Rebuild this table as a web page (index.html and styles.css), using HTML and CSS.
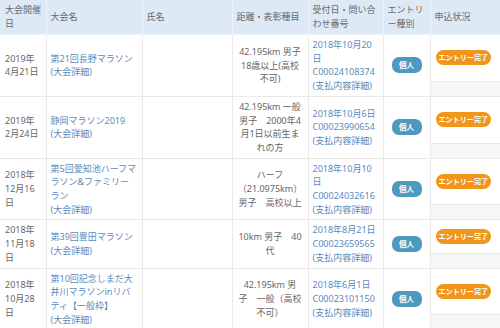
FILE: index.html
```html
<!DOCTYPE html>
<html lang="ja">
<head>
<meta charset="utf-8">
<title>エントリー履歴</title>
<link rel="stylesheet" href="styles.css">
</head>
<body>
<table class="history">
  <colgroup>
    <col class="c-date"><col class="c-name"><col class="c-person"><col class="c-dist"><col class="c-recv"><col class="c-type"><col class="c-status">
  </colgroup>
  <thead>
    <tr>
      <th>大会開催日</th>
      <th>大会名</th>
      <th>氏名</th>
      <th>距離・表彰種目</th>
      <th>受付日・問い合わせ番号</th>
      <th>エントリー種別</th>
      <th>申込状況</th>
    </tr>
  </thead>
  <tbody>
    <tr>
      <td>2019年<br>4月21日</td>
      <td><a href="#">第21回長野マラソン</a><br><a href="#">(大会詳細)</a></td>
      <td></td>
      <td class="dist">42.195km 男子<br>18歳以上(高校<br>不可)</td>
      <td><a href="#">2018年10月20<br>日<br>C00024108374</a><br><a href="#">(支払内容詳細)</a></td>
      <td class="type"><span class="badge">個人</span></td>
      <td class="status"><div class="status-wrap"><div class="status-top"><span class="done">エントリー完了</span></div><div class="status-sub"></div></div></td>
    </tr>
    <tr>
      <td>2019年<br>2月24日</td>
      <td><a href="#">静岡マラソン2019</a><br><a href="#">(大会詳細)</a></td>
      <td></td>
      <td class="dist">42.195km 一般<br>男子　2000年4<br>月1日以前生ま<br>れの方</td>
      <td><a href="#">2018年10月6日<br>C00023990654</a><br><a href="#">(支払内容詳細)</a></td>
      <td class="type"><span class="badge">個人</span></td>
      <td class="status"><div class="status-wrap"><div class="status-top"><span class="done">エントリー完了</span></div><div class="status-sub"></div></div></td>
    </tr>
    <tr>
      <td>2018年<br>12月16<br>日</td>
      <td><a href="#">第5回愛知池ハーフマ<br>ラソン&amp;ファミリー<br>ラン</a><br><a href="#">(大会詳細)</a></td>
      <td></td>
      <td class="dist">ハーフ<br>（21.0975km）<br>男子　高校以上</td>
      <td><a href="#">2018年10月10<br>日<br>C00024032616</a><br><a href="#">(支払内容詳細)</a></td>
      <td class="type"><span class="badge">個人</span></td>
      <td class="status"><div class="status-wrap"><div class="status-top"><span class="done">エントリー完了</span></div><div class="status-sub"></div></div></td>
    </tr>
    <tr>
      <td>2018年<br>11月18<br>日</td>
      <td><a href="#">第39回豊田マラソン</a><br><a href="#">(大会詳細)</a></td>
      <td></td>
      <td class="dist">10km 男子　40<br>代</td>
      <td><a href="#">2018年8月21日<br>C00023659565</a><br><a href="#">(支払内容詳細)</a></td>
      <td class="type"><span class="badge">個人</span></td>
      <td class="status"><div class="status-wrap"><div class="status-top"><span class="done">エントリー完了</span></div><div class="status-sub"></div></div></td>
    </tr>
    <tr>
      <td>2018年<br>10月28<br>日</td>
      <td><a href="#">第10回記念しまだ大<br>井川マラソンinリバ<br>ティ【一般枠】</a><br><a href="#">(大会詳細)</a></td>
      <td></td>
      <td class="dist">42.195km 男<br>子　一般（高校<br>不可）</td>
      <td><a href="#">2018年6月1日<br>C00023101150</a><br><a href="#">(支払内容詳細)</a></td>
      <td class="type"><span class="badge">個人</span></td>
      <td class="status"><div class="status-wrap"><div class="status-top"><span class="done">エントリー完了</span></div><div class="status-sub"></div></div></td>
    </tr>
  </tbody>
</table>
</body>
</html>
```
FILE: styles.css
```css
html, body {
  margin: 0;
  padding: 0;
  background: #fff;
}
body {
  font-family: "Noto Sans", "Noto Sans CJK JP", sans-serif;
  font-size: 9px;
  line-height: 13.7px;
  color: #666;
}
.history {
  width: 500px;
  border-collapse: collapse;
  table-layout: fixed;
}
.c-date { width: 46px; }
.c-name { width: 96px; }
.c-person { width: 90px; }
.c-dist { width: 76px; }
.c-recv { width: 75px; }
.c-type { width: 47px; }
.c-status { width: 70px; }

.history th,
.history td {
  border: 1px solid #e9e9e9;
  padding: 3px 4px;
  text-align: left;
  vertical-align: middle;
}
.history tr > :first-child { border-left: none; padding-left: 5px; }
.history tr > :last-child { border-right: none; }
.history thead tr > * { border-top: none; }
.history th {
  background: #dde9f5;
  font-weight: normal;
  color: #6a6a6a;
  border-color: #eef4fa;
  height: 28px;
}
.history a {
  color: #5a8bbd;
  text-decoration: none;
}
.history td.dist { text-align: center; padding-left: 3px; padding-right: 3px; }
.history td.type { text-align: center; padding: 0; }
.badge {
  display: inline-block;
  width: 30px;
  height: 16px;
  line-height: 16px;
  border-radius: 7px;
  background: #4c9bbf;
  color: #fff;
  font-size: 7.5px;
  font-weight: bold;
  text-align: center;
}
.history td.status {
  padding: 0;
  height: 1px;
  vertical-align: top;
}
.status-wrap {
  height: 100%;
  display: flex;
  flex-direction: column;
}
.status-top {
  flex: 1;
  display: flex;
  align-items: center;
  padding-left: 5px;
}
.status-sub {
  height: 14px;
  border-top: 1px solid #e9e9e9;
  background: #f6f6f6;
}
.done {
  display: inline-block;
  height: 15px;
  line-height: 15px;
  padding: 0 3px;
  border-radius: 8px;
  background: #f0961c;
  color: #fff;
  font-size: 7.1px;
  font-weight: bold;
  white-space: nowrap;
}
```
